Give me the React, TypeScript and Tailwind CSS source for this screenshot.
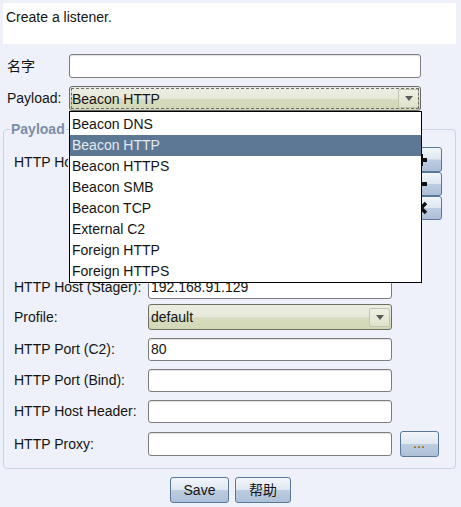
import React from 'react';

const inputCls =
  'h-[23px] bg-white border border-[#7d7d7d] rounded-[3px] shadow-[inset_0_1px_1px_rgba(0,0,0,0.12)] px-[2px] leading-[21px] text-[14px]';

const btnCls =
  'border border-[#58779a] rounded-[3px] bg-[linear-gradient(to_bottom,#f3f6fa_0%,#dfe7f1_48%,#bdcde0_52%,#adc0d7_100%)] flex items-center justify-center';

const selectBg =
  'bg-[linear-gradient(to_bottom,#ecede2_0%,#e6e9da_50%,#d7dcc0_54%,#d2d7b6_100%)]';

function Arrow() {
  return (
    <div className="w-[21px] h-[19px] mr-[1px] border border-[#c2c6b0] rounded-[2px] bg-[linear-gradient(to_bottom,#eef0e4_0%,#dfe3cc_100%)] flex items-center justify-center">
      <svg width="8" height="5" viewBox="0 0 8 5">
        <path d="M0 0 H8 L4 5 Z" fill="#5a5a5a" />
      </svg>
    </div>
  );
}

const payloads = [
  'Beacon DNS',
  'Beacon HTTP',
  'Beacon HTTPS',
  'Beacon SMB',
  'Beacon TCP',
  'External C2',
  'Foreign HTTP',
  'Foreign HTTPS',
];

export default function App() {
  return (
    <div className="w-[461px] h-[507px] bg-[#eef1f9] px-[3px] pt-[3px] font-['Liberation_Sans',Arial,'Noto_Sans_CJK_SC',sans-serif] text-[14px] text-[#141414] overflow-hidden">
      {/* header */}
      <div className="w-[453px] h-[41px] bg-white px-[3px] pt-[4px] leading-[20px]">
        Create a listener.
      </div>

      {/* name */}
      <div className="flex items-center mt-[10px]">
        <div className="w-[66px] pl-[4px]">名字</div>
        <div className={`${inputCls} w-[352px] h-[24px]`} />
      </div>

      {/* payload */}
      <div className="flex items-center mt-[8px]">
        <div className="w-[66px] pl-[4px]">Payload:</div>
        <div className="relative">
          <div
            className={`w-[352px] h-[25px] border border-[#6a6a6a] rounded-[3px] ${selectBg} outline-dashed outline-1 outline-[#6e6e6e] outline-offset-[-3px] flex items-center justify-between pl-[2px]`}
          >
            <span className="leading-[20px]">Beacon HTTP</span>
            <Arrow />
          </div>
          <div className="absolute left-0 top-full w-[353px] bg-white border border-black pt-[2px] z-10">
            {payloads.map((p) => (
              <div
                key={p}
                className={`h-[21px] leading-[21px] pl-[2px] ${
                  p === 'Beacon HTTP' ? 'bg-[#5d7895] text-[#e4e9ef]' : ''
                }`}
              >
                {p}
              </div>
            ))}
          </div>
        </div>
      </div>

      {/* payload options */}
      <fieldset className="w-[453px] mt-[10px] border border-[#c9d4e4] rounded-[4px] pl-[6px] pr-[6px] pb-[11px]">
        <legend className="px-[1px] leading-[16px] font-bold text-[#7d8ea8]">Payload</legend>
        <div className="pl-[4px] pt-[10px] flex flex-col">
          <div className="flex">
            {/* label is hidden behind the open dropdown past x=68 */}
            <div className="w-[134px] pt-[7px] leading-[16px]">
              <span className="inline-block w-[54px] overflow-hidden whitespace-nowrap align-top">
                HTTP Hosts:
              </span>
            </div>
            <div className="w-[244px] h-[121px] bg-white border border-[#7d7d7d] rounded-[3px]" />
            <div className="ml-[8px] flex flex-col">
              <div className={`${btnCls} w-[42px] h-[25px]`}>
                <svg width="16" height="16" viewBox="0 0 16 16">
                  <path d="M8 2 V14 M2 8 H14" stroke="#111" strokeWidth="4" />
                </svg>
              </div>
              <div className={`${btnCls} w-[42px] h-[24px]`}>
                <svg width="16" height="16" viewBox="0 0 16 16">
                  <path d="M2 8 H14" stroke="#111" strokeWidth="4" />
                </svg>
              </div>
              <div className={`${btnCls} w-[42px] h-[24px]`}>
                <svg width="16" height="16" viewBox="0 0 16 16">
                  <path d="M3 3 L13 13 M13 3 L3 13" stroke="#111" strokeWidth="3.5" />
                </svg>
              </div>
            </div>
          </div>

          <div className="flex items-center mt-[8px]">
            <div className="w-[134px]">HTTP Host (Stager):</div>
            <div className={`${inputCls} w-[244px]`}>192.168.91.129</div>
          </div>

          <div className="flex items-center mt-[5px]">
            <div className="w-[134px]">Profile:</div>
            <div
              className={`w-[244px] h-[26px] border border-[#6d6f62] rounded-[3px] ${selectBg} flex items-center justify-between pl-[2px]`}
            >
              <span className="leading-[20px]">default</span>
              <Arrow />
            </div>
          </div>

          <div className="flex items-center mt-[8px]">
            <div className="w-[134px]">HTTP Port (C2):</div>
            <div className={`${inputCls} w-[244px]`}>80</div>
          </div>

          <div className="flex items-center mt-[8px]">
            <div className="w-[134px]">HTTP Port (Bind):</div>
            <div className={`${inputCls} w-[244px]`} />
          </div>

          <div className="flex items-center mt-[8px]">
            <div className="w-[134px]">HTTP Host Header:</div>
            <div className={`${inputCls} w-[244px]`} />
          </div>

          <div className="flex items-center mt-[8px]">
            <div className="w-[134px]">HTTP Proxy:</div>
            <div className={`${inputCls} w-[244px] h-[24px]`} />
            <div className={`${btnCls} ml-[8px] w-[39px] h-[26px]`}>
              <span className="text-[11px] leading-[10px] text-[#9a5a1a] tracking-[1px] font-bold">...</span>
            </div>
          </div>
        </div>
      </fieldset>

      {/* actions */}
      <div className="flex justify-center gap-[6px] mt-[8px] w-[455px]">
        <div className={`${btnCls} w-[59px] h-[26px]`}>Save</div>
        <div className={`${btnCls} w-[56px] h-[26px]`}>帮助</div>
      </div>
    </div>
  );
}
